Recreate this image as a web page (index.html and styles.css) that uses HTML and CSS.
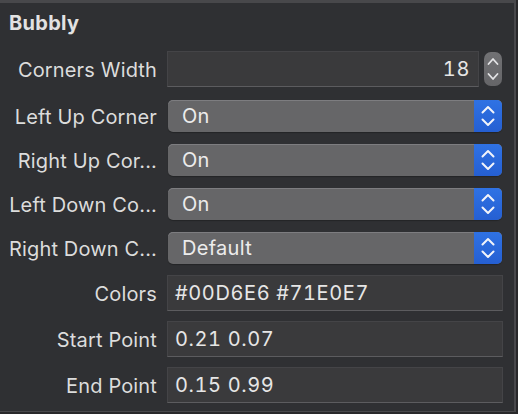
FILE: index.html
```html
<!DOCTYPE html>
<html>
<head>
<meta charset="utf-8">
<link rel="stylesheet" href="styles.css">
</head>
<body>
<div class="panel">
  <div class="title">Bubbly</div>
  <div class="rows">
    <div class="row field-row first">
      <div class="label">Corners Width</div>
      <div class="field num">18</div>
      <div class="stepper">
        <svg width="18" height="34" viewBox="0 0 18 34"><path d="M4.5 12 L9 7 L13.5 12 M4.5 22 L9 27 L13.5 22" fill="none" stroke="#e4e4e6" stroke-width="1.8" stroke-linecap="round" stroke-linejoin="round"/></svg>
      </div>
    </div>
    <div class="row popup-row p1">
      <div class="label">Left Up Corner</div>
      <div class="popup"><span class="pv">On</span><span class="arrows"><svg width="28" height="32" viewBox="0 0 28 32"><path d="M8.5 12.5 L14 7 L19.5 12.5 M8.5 19.5 L14 25 L19.5 19.5" fill="none" stroke="#f2f4fa" stroke-width="2" stroke-linecap="round" stroke-linejoin="round"/></svg></span></div>
    </div>
    <div class="row popup-row">
      <div class="label">Right Up Cor...</div>
      <div class="popup"><span class="pv">On</span><span class="arrows"><svg width="28" height="32" viewBox="0 0 28 32"><path d="M8.5 12.5 L14 7 L19.5 12.5 M8.5 19.5 L14 25 L19.5 19.5" fill="none" stroke="#f2f4fa" stroke-width="2" stroke-linecap="round" stroke-linejoin="round"/></svg></span></div>
    </div>
    <div class="row popup-row">
      <div class="label">Left Down Co...</div>
      <div class="popup"><span class="pv">On</span><span class="arrows"><svg width="28" height="32" viewBox="0 0 28 32"><path d="M8.5 12.5 L14 7 L19.5 12.5 M8.5 19.5 L14 25 L19.5 19.5" fill="none" stroke="#f2f4fa" stroke-width="2" stroke-linecap="round" stroke-linejoin="round"/></svg></span></div>
    </div>
    <div class="row popup-row">
      <div class="label">Right Down C...</div>
      <div class="popup"><span class="pv">Default</span><span class="arrows"><svg width="28" height="32" viewBox="0 0 28 32"><path d="M8.5 12.5 L14 7 L19.5 12.5 M8.5 19.5 L14 25 L19.5 19.5" fill="none" stroke="#f2f4fa" stroke-width="2" stroke-linecap="round" stroke-linejoin="round"/></svg></span></div>
    </div>
    <div class="row field-row f1">
      <div class="label">Colors</div>
      <div class="field wide">#00D6E6 #71E0E7</div>
    </div>
    <div class="row field-row">
      <div class="label">Start Point</div>
      <div class="field wide">0.21 0.07</div>
    </div>
    <div class="row field-row">
      <div class="label">End Point</div>
      <div class="field wide">0.15 0.99</div>
    </div>
  </div>
</div>
</body>
</html>
```
FILE: styles.css
```css
html, body {
  margin: 0;
  padding: 0;
  background: #28282a;
}
body {
  width: 518px;
  height: 414px;
  overflow: hidden;
  font-family: Inter, "Liberation Sans", sans-serif;
}
.panel {
  box-sizing: border-box;
  width: 516px;
  height: 412px;
  background: #2f3033;
  border-top: 3px solid #48484b;
  border-right: 2px solid #48484b;
  border-bottom: 1px solid #48484b;
}
.title {
  padding: 8px 0 0 9px;
  height: 24px;
  line-height: 24px;
  font-size: 20px;
  font-weight: 700;
  letter-spacing: 0.3px;
  color: #e2e2e2;
}
.rows {
  display: flex;
  flex-direction: column;
  padding-top: 16px;
}
.row {
  display: flex;
  align-items: center;
}
.field-row { height: 36px; margin-top: 10px; }
.popup-row { height: 32px; margin-top: 12px; }
.row.first { margin-top: 0; }
.row.p1 { margin-top: 13px; }
.row.f1 { margin-top: 11px; }
.label {
  width: 157px;
  flex: none;
  text-align: right;
  font-size: 20px;
  letter-spacing: 0.15px;
  color: #dcdcdc;
  white-space: nowrap;
  padding-top: 1px;
}
.field {
  box-sizing: border-box;
  height: 36px;
  margin-left: 10px;
  background: #3a3a3c;
  border: 1px solid #444447;
  border-bottom-color: #5c5c5f;
  font-size: 20px;
  line-height: 35px;
  color: #e6e6e6;
  font-feature-settings: "tnum";
  letter-spacing: 0.6px;
}
.field.num {
  width: 312px;
  text-align: right;
  padding-right: 8px;
}
.field.wide {
  width: 336px;
  padding-left: 7px;
}
.stepper {
  width: 18px;
  height: 34px;
  margin-left: 5px;
  border-radius: 7px;
  background: linear-gradient(#717174, #656568);
  display: flex;
}
.popup {
  box-sizing: border-box;
  width: 334px;
  height: 32px;
  margin-left: 11px;
  display: flex;
  border-radius: 5px;
  background: #666668;
  box-shadow: inset 0 1px 0 #7d7d80, 0 1px 1px rgba(0,0,0,0.25);
  overflow: hidden;
}
.pv {
  flex: 1;
  padding-left: 14px;
  font-size: 20px;
  line-height: 33px;
  letter-spacing: 0.3px;
  color: #ececec;
}
.arrows {
  width: 28px;
  height: 32px;
  display: flex;
  background: linear-gradient(#2f72e4, #255fd2);
}
```
